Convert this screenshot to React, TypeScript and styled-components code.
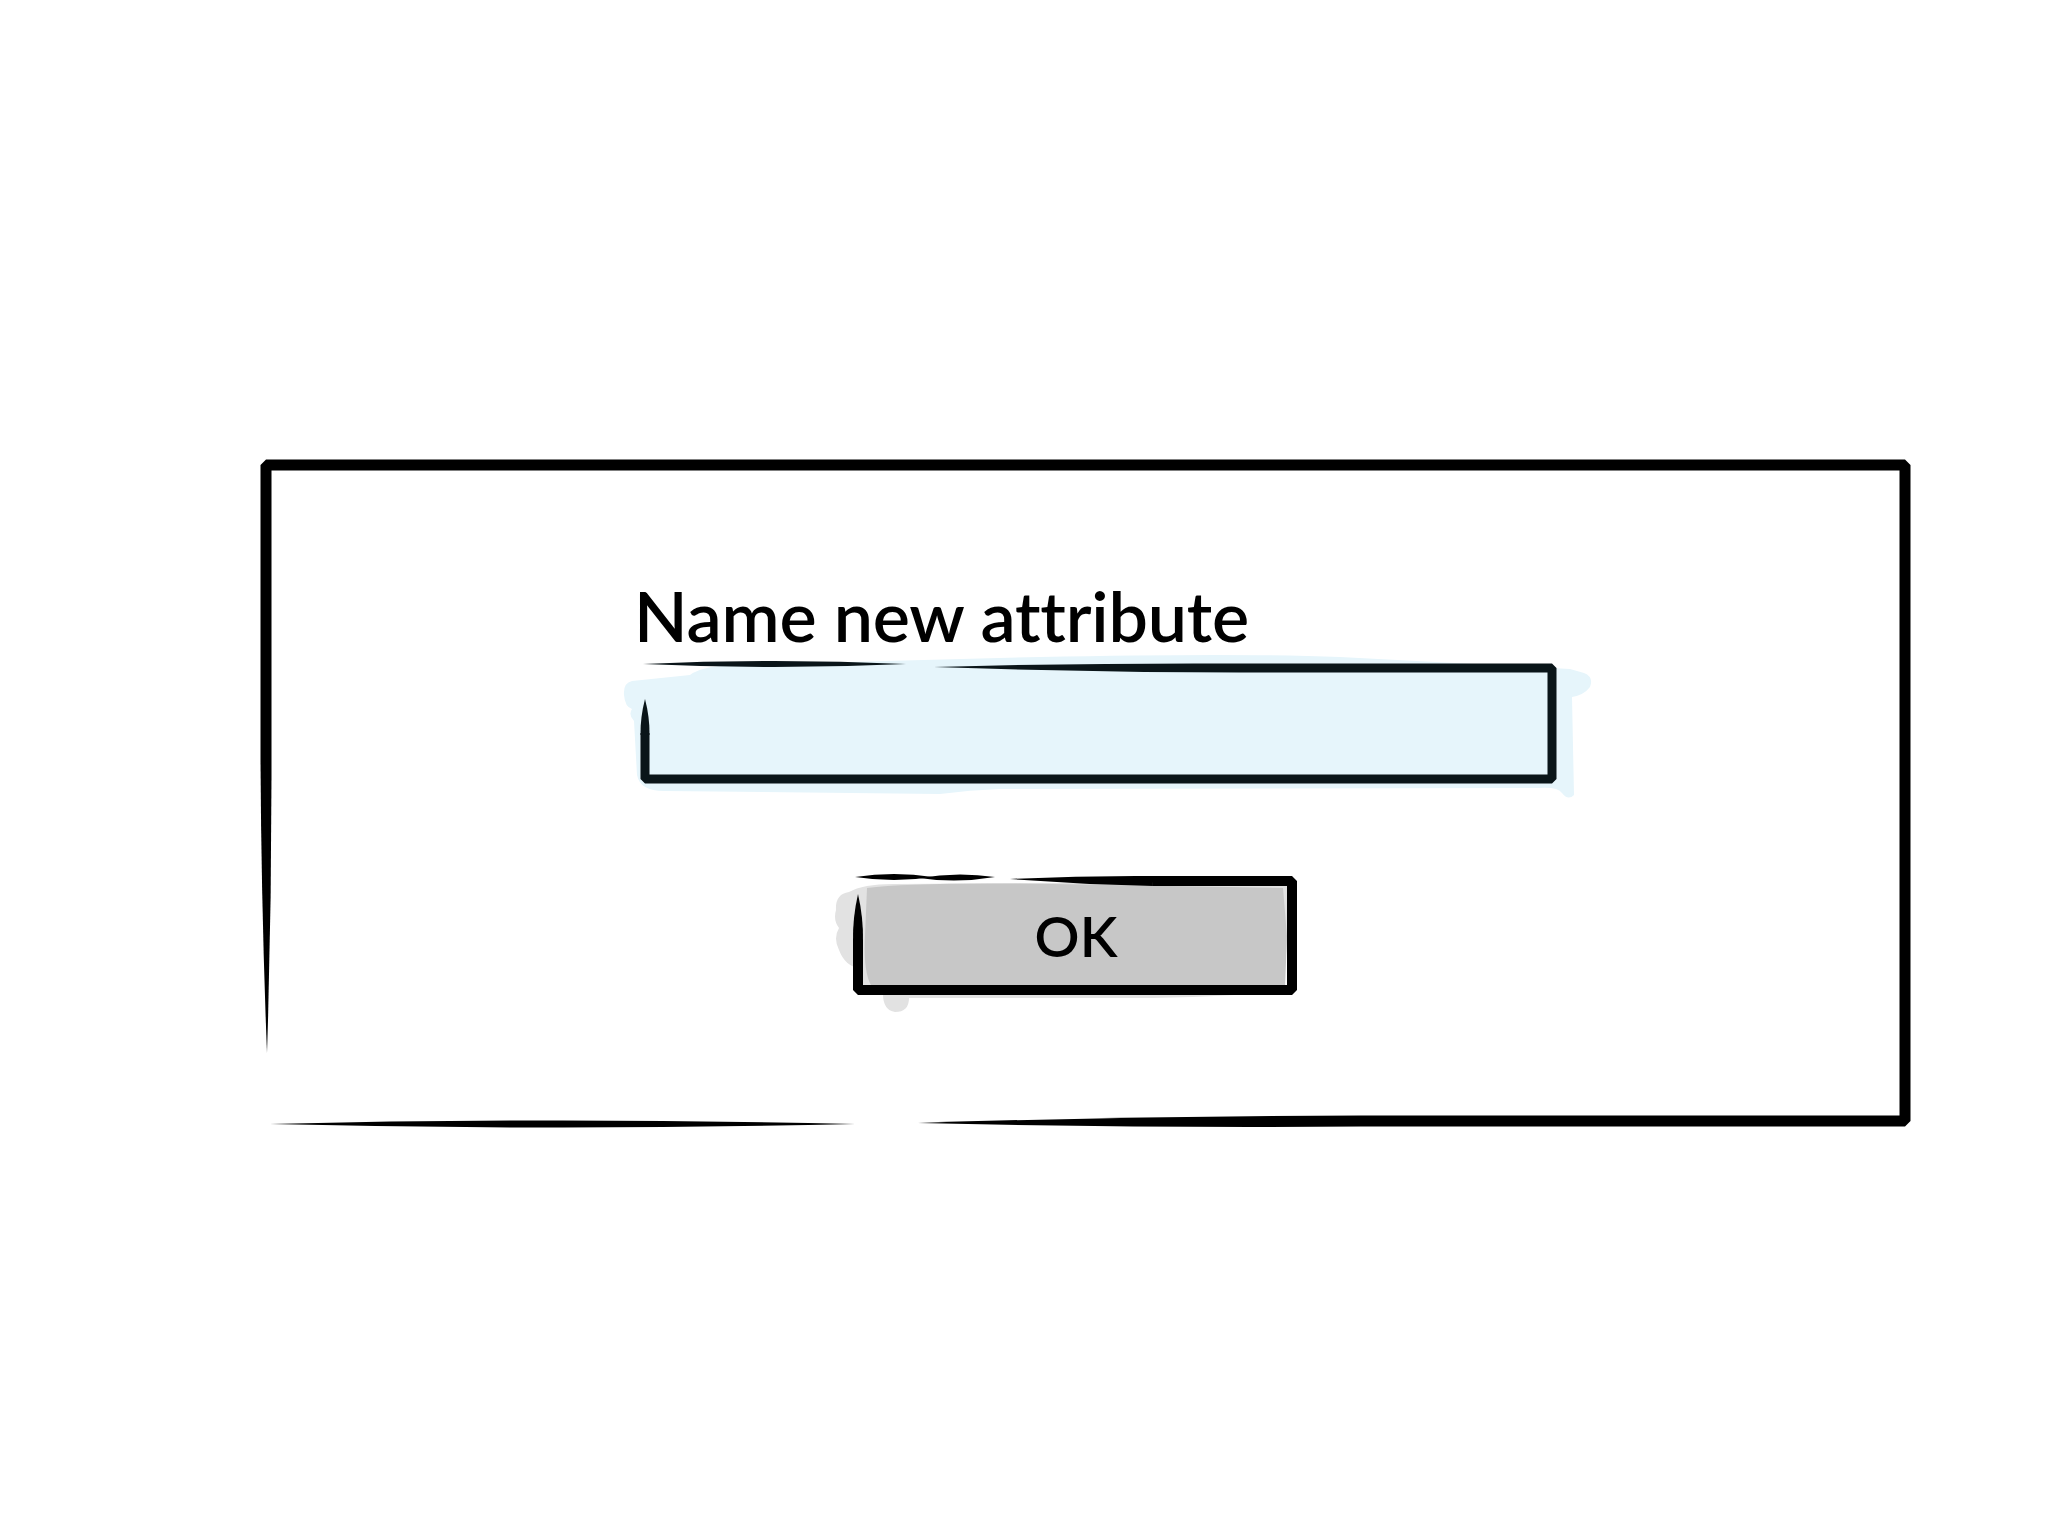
import React from "react";
import styled, { createGlobalStyle } from "styled-components";

const GlobalStyle = createGlobalStyle`
  html, body { margin: 0; padding: 0; background: #ffffff; }
  body { font-family: "Lato", "Open Sans", sans-serif; color: #000; }
`;

type Pt = [number, number];

// Tapered brush stroke from (x1,y1) to (x2,y2) with widths at start / middle / end
function brush(x1: number, y1: number, x2: number, y2: number, w1: number, wm: number, w2: number): string {
  const dx = x2 - x1;
  const dy = y2 - y1;
  const len = Math.hypot(dx, dy) || 1;
  const nx = -dy / len;
  const ny = dx / len;
  const mx = (x1 + x2) / 2;
  const my = (y1 + y2) / 2;
  const side = (s: number) => {
    const a: Pt = [x1 + nx * s * w1 / 2, y1 + ny * s * w1 / 2];
    const b: Pt = [x2 + nx * s * w2 / 2, y2 + ny * s * w2 / 2];
    const m: Pt = [mx + nx * s * wm / 2, my + ny * s * wm / 2];
    const c: Pt = [2 * m[0] - (a[0] + b[0]) / 2, 2 * m[1] - (a[1] + b[1]) / 2];
    return { a, b, c };
  };
  const p = side(1);
  const q = side(-1);
  const f = (v: number) => v.toFixed(2);
  return `M${f(p.a[0])} ${f(p.a[1])} Q${f(p.c[0])} ${f(p.c[1])} ${f(p.b[0])} ${f(p.b[1])} L${f(q.b[0])} ${f(q.b[1])} Q${f(q.c[0])} ${f(q.c[1])} ${f(q.a[0])} ${f(q.a[1])} Z`;
}

const Page = styled.main`
  min-height: 100vh;
  box-sizing: border-box;
  padding: 460px 0 0 261px;
  display: flex;
  align-items: flex-start;
`;

const Dialog = styled.section`
  position: relative;
  width: 1649px;
  height: 666px;
  box-sizing: border-box;
  padding: 120px 0 0 379px;
  display: flex;
  flex-direction: column;
  align-items: flex-start;
`;

const Sketch = styled.svg`
  position: absolute;
  left: 0;
  top: 0;
  width: 100%;
  height: 100%;
  overflow: visible;
  pointer-events: none;
`;

const Title = styled.h1`
  margin: 0 0 13px -6px;
  font-family: "Lato", "Open Sans", sans-serif;
  font-weight: 600;
  font-size: 70px;
  line-height: 70px;
  letter-spacing: -0.2px;
  color: #000;
  white-space: nowrap;
`;

const InputField = styled.div`
  position: relative;
  width: 917px;
  height: 121px;
`;

const Button = styled.button`
  position: relative;
  margin: 92px 0 0 213px;
  width: 444px;
  height: 120px;
  padding: 0;
  border: 0;
  background: transparent;
  display: flex;
  align-items: center;
  justify-content: center;
  cursor: pointer;
`;

const ButtonLabel = styled.span`
  position: relative;
  font-family: "Lato", "Open Sans", sans-serif;
  font-weight: 600;
  font-size: 56px;
  line-height: 56px;
  color: #000;
  margin-left: 2px;
`;

function DialogFrame() {
  const W = 1649;
  const H = 666;
  return (
    <Sketch viewBox={`0 0 ${W} ${H}`} aria-hidden>
      <polyline
        points={`5,300 5,5 1644,5 1644,661 1100,661`}
        fill="none"
        stroke="#000"
        strokeWidth={11}
        strokeLinejoin="bevel"
      />
      <path d={brush(5, 300, 6, 593, 11, 8, 0)} fill="#000" />
      <path d={brush(657, 663, 1100, 661, 0, 9, 11)} fill="#000" />
      <path d={brush(9, 664, 594, 664, 0, 7, 0)} fill="#000" />
    </Sketch>
  );
}

function InputFrame() {
  const ink = "#0a1519";
  return (
    <Sketch viewBox="0 0 917 121" aria-hidden>
      <path
        d="M-8 18 Q-17 20 -16 32 Q-15 44 -8 46 Q-12 52 -6 58 L-3 112 Q0 128 24 128 L300 131 Q330 127 360 126 L900 125 Q918 124 922 130 Q928 138 934 132 L932 34 Q944 32 950 24 Q954 14 944 10 L930 6 L700 -6 Q600 -10 400 -6 L90 2 Q60 4 50 12 Z"
        fill="#e6f5fb"
      />
      <polyline
        points="5,70 5,116 912,116 912,5 600,5"
        fill="none"
        stroke={ink}
        strokeWidth={9}
        strokeLinejoin="bevel"
      />
      <path d={brush(5, 36, 5, 72, 0, 7, 9)} fill={ink} />
      <path d={brush(294, 4, 600, 5, 0, 7, 9)} fill={ink} />
      <path d={brush(3, 1, 266, 1, 0, 6, 0)} fill={ink} />
    </Sketch>
  );
}

function ButtonFrame() {
  return (
    <Sketch viewBox="0 0 444 120" aria-hidden>
      <path
        d="M-4 16 Q-18 18 -17 34 Q-20 44 -14 52 Q-20 62 -14 74 Q-8 90 6 92 L10 110 Q18 118 30 118 Q30 134 42 136 Q56 136 56 122 L300 122 Q400 120 430 114 L438 20 Q440 8 420 6 L40 8 Q10 8 -4 16 Z"
        fill="#e2e2e2"
      />
      <path
        d="M14 12 Q60 6 200 8 L430 12 L434 60 L432 112 L300 114 L20 112 Q10 100 12 60 Z"
        fill="#c7c7c7"
      />
      <polyline
        points="5,64 5,114 439,114 439,5 300,5"
        fill="none"
        stroke="#000"
        strokeWidth={10}
        strokeLinejoin="bevel"
      />
      <path d={brush(5, 18, 5, 66, 0, 8, 10)} fill="#000" />
      <path d={brush(157, 3, 300, 5, 0, 7, 10)} fill="#000" />
      <path d={brush(2, 1, 80, 1, 0, 6, 0)} fill="#000" />
      <path d={brush(66, 2, 142, 1, 0, 6, 0)} fill="#000" />
    </Sketch>
  );
}

export default function App() {
  return (
    <>
      <GlobalStyle />
      <Page>
        <Dialog>
          <DialogFrame />
          <Title>Name new attribute</Title>
          <InputField>
            <InputFrame />
          </InputField>
          <Button type="button">
            <ButtonFrame />
            <ButtonLabel>OK</ButtonLabel>
          </Button>
        </Dialog>
      </Page>
    </>
  );
}
